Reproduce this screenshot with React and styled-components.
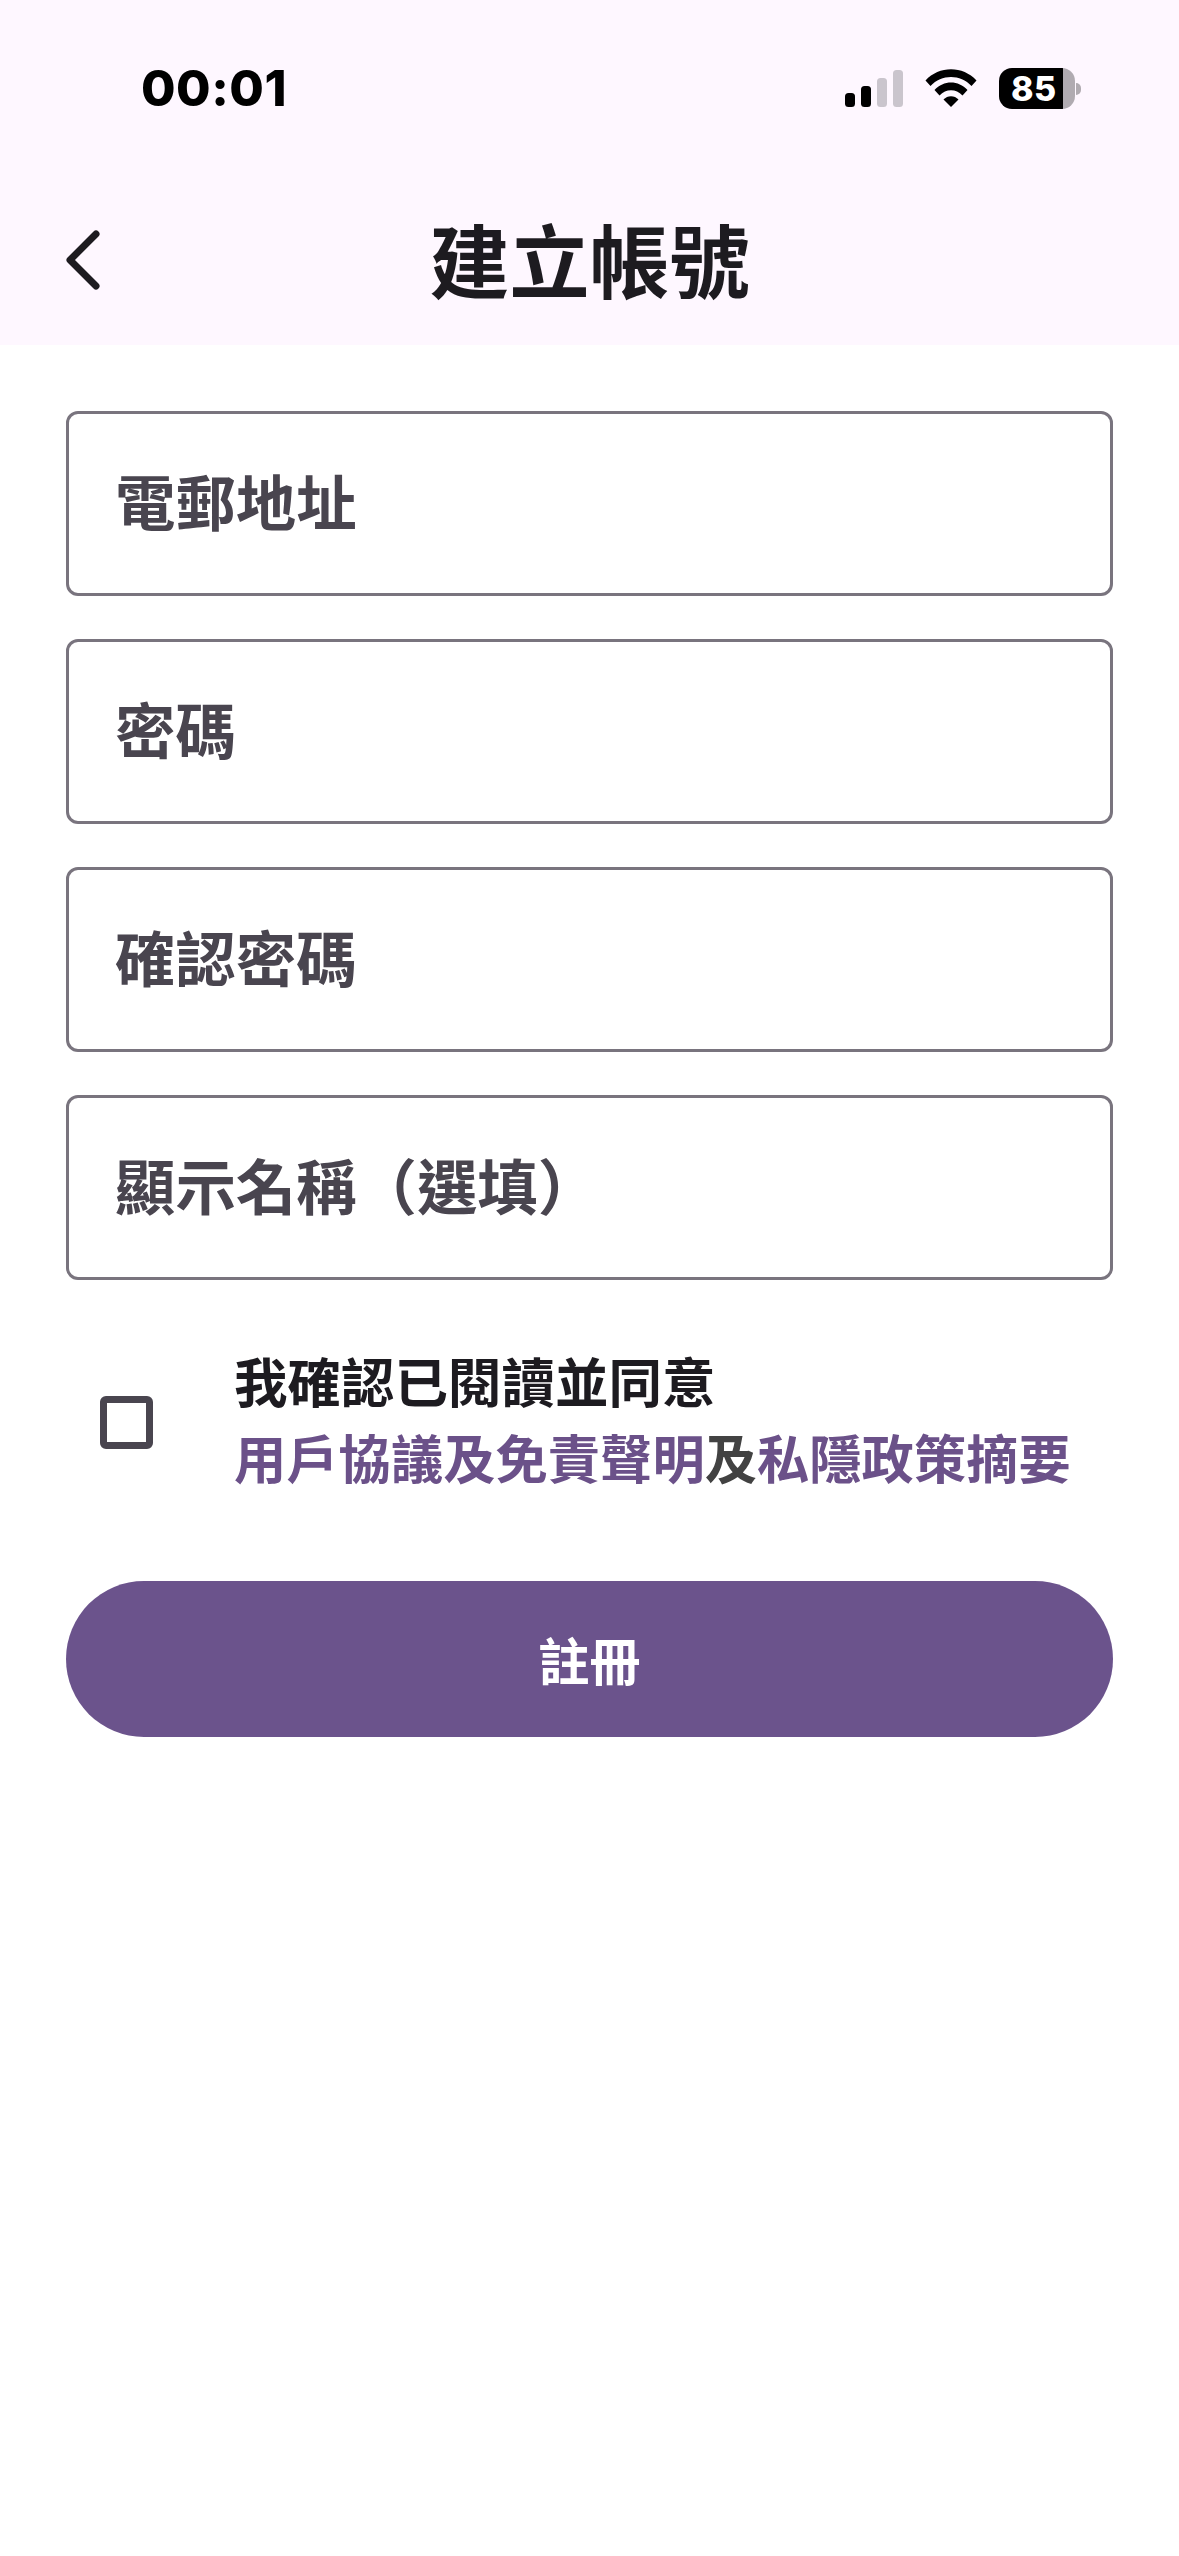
import React from "react";
import styled, { createGlobalStyle } from "styled-components";

const FONT = `"Inter", "Noto Sans CJK TC", sans-serif`;

const Global = createGlobalStyle`
  html, body {
    margin: 0;
    padding: 0;
    background: #ffffff;
  }
  * {
    box-sizing: border-box;
  }
`;

const Page = styled.div`
  width: 1179px;
  height: 2556px;
  background: #ffffff;
  font-family: ${FONT};
  overflow: hidden;
`;

const Header = styled.header`
  height: 345px;
  background: #fef7ff;
  display: flex;
  flex-direction: column;
`;

const StatusBar = styled.div`
  height: 215px;
  padding: 60px 98px 0 141px;
  display: flex;
  align-items: flex-start;
  justify-content: space-between;
`;

const Clock = styled.div`
  font-size: 50px;
  line-height: 56px;
  font-weight: 800;
  color: #000000;
  letter-spacing: 0.5px;
`;

const StatusIcons = styled.div`
  display: flex;
  align-items: center;
  height: 50px;
  margin-top: 3px;
`;

const NavBar = styled.div`
  display: flex;
  align-items: center;
  justify-content: center;
  height: 90px;
  position: relative;
`;

const BackButton = styled.div`
  position: absolute;
  left: 60px;
  top: 14px;
  width: 50px;
  height: 62px;
`;

const Title = styled.h1`
  margin: 6px 0 0;
  font-size: 80px;
  line-height: 90px;
  font-weight: 700;
  color: #1d1b20;
`;

const Form = styled.main`
  padding: 66px 66px 0;
  display: flex;
  flex-direction: column;
`;

const Fields = styled.div`
  display: flex;
  flex-direction: column;
  gap: 43px;
`;

const Field = styled.div`
  height: 185px;
  border: 3px solid #79747e;
  border-radius: 12px;
  padding: 0 47px 8px 46px;
  display: flex;
  align-items: center;
  font-size: 60.4px;
  font-weight: 700;
  color: #49454f;
`;

const Consent = styled.div`
  margin-top: 66px;
  display: flex;
  align-items: center;
`;

const CheckBox = styled.div`
  width: 53px;
  height: 53px;
  margin-left: 34px;
  flex: none;
  border: 7px solid #49454f;
  border-radius: 6px;
`;

const ConsentText = styled.div`
  margin-left: 81px;
  line-height: 76px;
  font-weight: 700;
  white-space: nowrap;
`;

const ConfirmLine = styled.div`
  font-size: 53.5px;
  color: #1d1b20;
`;

const AgreementLine = styled.div`
  font-size: 52.3px;
  color: #424242;
`;

const DocLink = styled.span`
  color: #6b5189;
`;

const SubmitButton = styled.button`
  margin-top: 83px;
  height: 156px;
  width: 100%;
  border: none;
  border-radius: 78px;
  background: #6b538c;
  color: #ffffff;
  font-family: ${FONT};
  font-size: 51px;
  font-weight: 700;
`;

function SignalIcon() {
  return (
    <svg width="58" height="37" viewBox="0 0 58 37" style={{ display: "block" }}>
      <rect x="0" y="23" width="10" height="14" rx="3.5" fill="#000" />
      <rect x="16" y="16" width="10" height="21" rx="3.5" fill="#000" />
      <rect x="32" y="8" width="10" height="29" rx="3.5" fill="#cac5cd" />
      <rect x="48" y="0" width="10" height="37" rx="3.5" fill="#cac5cd" />
    </svg>
  );
}

function WifiIcon() {
  return (
    <svg width="52" height="38" viewBox="0 0 52 38" style={{ display: "block", marginLeft: 22 }}>
      <path d="M0.5 11.5 C14 -3.5 38 -3.5 51.5 11.5 L46.5 17 C35.5 5 16.5 5 5.5 17 Z" fill="#000" />
      <path d="M9.5 21 C18.5 11 33.5 11 42.5 21 L37.5 26.5 C31 19.5 21 19.5 14.5 26.5 Z" fill="#000" />
      <path d="M18.5 30.5 C22.5 26 29.5 26 33.5 30.5 L26 38 Z" fill="#000" />
    </svg>
  );
}

const Battery = styled.div`
  width: 76px;
  height: 41px;
  margin-left: 22px;
  margin-right: 6px;
  border-radius: 13px;
  overflow: hidden;
  background: linear-gradient(to right, #000 84%, #b0abb1 84%);
  color: #ffffff;
  font-size: 34px;
  line-height: 41px;
  font-weight: 800;
  padding-left: 12px;
  letter-spacing: 0.5px;
`;

const BatteryNub = styled.div`
  position: absolute;
  right: 0;
  top: 15px;
  width: 5px;
  height: 12px;
  background: #b0abb1;
  border-radius: 0 5px 5px 0;
`;

const BatteryWrap = styled.div`
  position: relative;
`;

export default function App() {
  return (
    <Page>
      <Global />
      <Header>
        <StatusBar>
          <Clock>00:01</Clock>
          <StatusIcons>
            <SignalIcon />
            <WifiIcon />
            <BatteryWrap>
              <Battery>85</Battery>
              <BatteryNub />
            </BatteryWrap>
          </StatusIcons>
        </StatusBar>
        <NavBar>
          <BackButton>
            <svg width="50" height="62" viewBox="0 0 50 62">
              <path d="M36 5 L10 31 L36 57" fill="none" stroke="#1d1b20" strokeWidth="7" strokeLinecap="round" strokeLinejoin="round" />
            </svg>
          </BackButton>
          <Title>建立帳號</Title>
        </NavBar>
      </Header>
      <Form>
        <Fields>
          <Field>電郵地址</Field>
          <Field>密碼</Field>
          <Field>確認密碼</Field>
          <Field>顯示名稱（選填）</Field>
        </Fields>
        <Consent>
          <CheckBox />
          <ConsentText>
            <ConfirmLine>我確認已閱讀並同意</ConfirmLine>
            <AgreementLine>
              <DocLink>用戶協議及免責聲明</DocLink>及<DocLink>私隱政策摘要</DocLink>
            </AgreementLine>
          </ConsentText>
        </Consent>
        <SubmitButton>註冊</SubmitButton>
      </Form>
    </Page>
  );
}
